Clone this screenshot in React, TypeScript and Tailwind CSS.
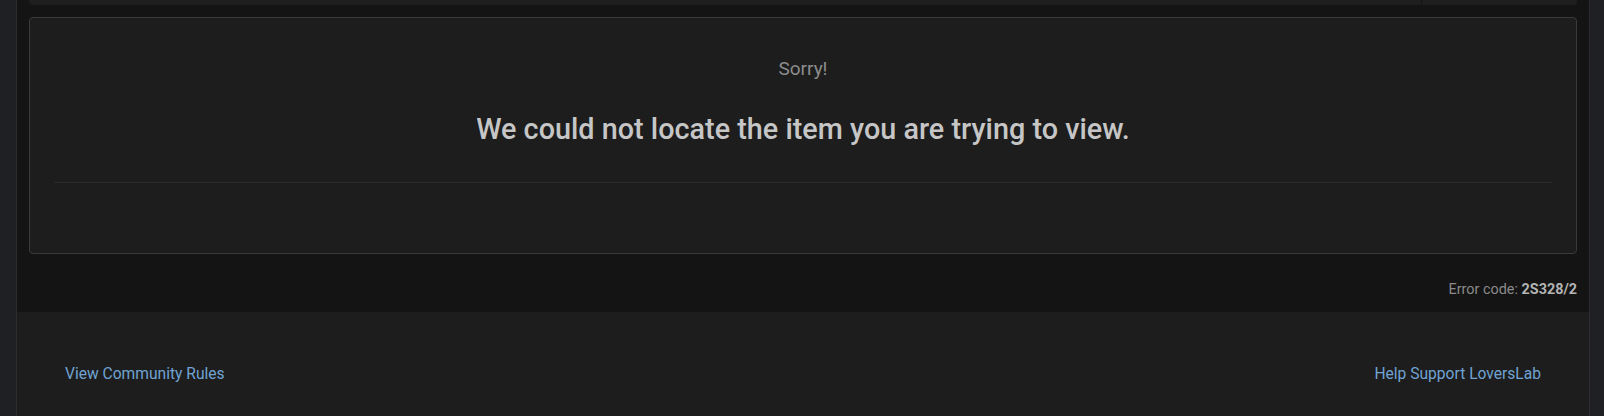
import React from 'react';

export default function App() {
    return (
        <div className="min-h-screen bg-[#1f2023] pl-[16px] pr-[14px] font-['Roboto',_'Liberation_Sans',_sans-serif]">
            <div className="min-h-screen border-x border-[#2c2c2c] flex flex-col">
                {/* Main area */}
                <div className="bg-[#141414] px-3">
                    {/* Breadcrumb bar (scrolled off the top) */}
                    <div className="h-[5px] flex bg-[#1e1e1e] rounded-b-[4px]">
                        <div className="flex-1" />
                        <div className="w-[156px] border-l border-[#141414]" />
                    </div>

                    {/* Message card */}
                    <div className="mt-3 bg-[#1d1d1d] border border-[#3a3a3a] rounded-[4px] px-6 pt-[37px] pb-[70px]">
                        <p className="text-center text-[19px] leading-[28px] text-[#8c8c8c]">Sorry!</p>
                        <h1 className="mt-[28px] text-center text-[28.8px] leading-[37px] font-medium text-[#c6c6c6]">
                            We could not locate the item you are trying to view.
                        </h1>
                        <div className="mt-[34px] border-t border-[#2b2b2b]" />
                    </div>

                    {/* Error code */}
                    <div className="pt-[26px] pb-[12px] text-right text-[14.4px] leading-[20px] text-[#8a8a8a]">
                        Error code: <strong className="font-bold text-[#b3b3b3]">2S328/2</strong>
                    </div>
                </div>

                {/* Footer */}
                <footer className="flex-1 bg-[#1d1d1d] px-12 pt-[52px] pb-[40px]">
                    <div className="flex items-center justify-between text-[15.6px] leading-[20px]">
                        <a href="#" className="text-[#70a3d3]">View Community Rules</a>
                        <a href="#" className="text-[#70a3d3]">Help Support LoversLab</a>
                    </div>
                </footer>
            </div>
        </div>
    );
}
